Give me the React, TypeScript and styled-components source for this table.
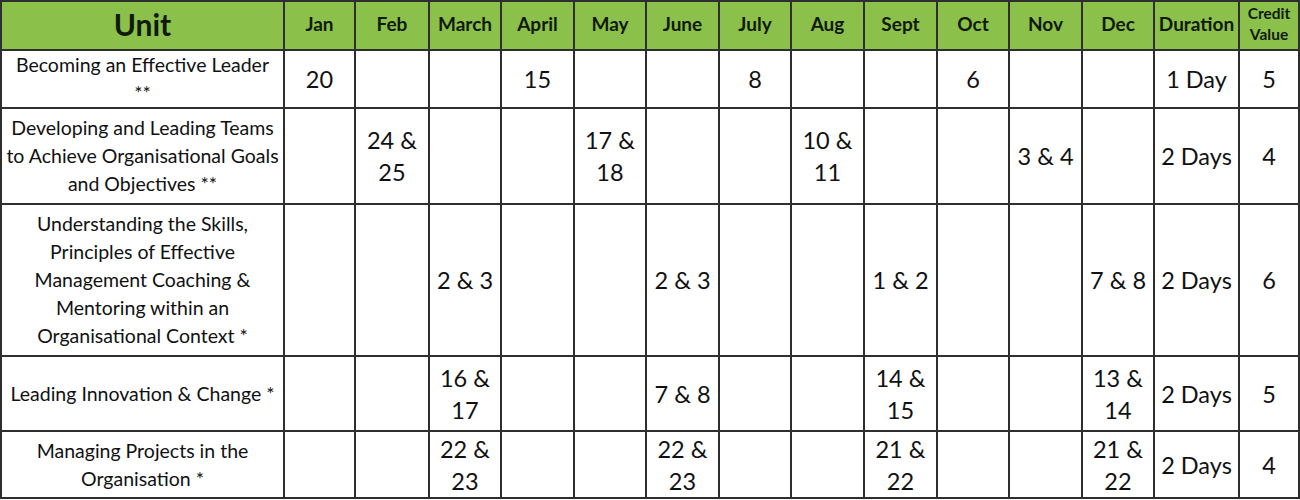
import React from 'react';
import styled, { createGlobalStyle } from 'styled-components';

const GlobalStyle = createGlobalStyle`
  html, body {
    margin: 0;
    padding: 0;
    background: #ffffff;
  }
  body {
    font-family: Lato, Carlito, 'Liberation Sans', sans-serif;
    color: #111;
  }
`;

interface IUnitRow {
  lines: string[];
  height: number;
  dates: Record<string, string>;
  duration: string;
  credit: string;
}

const months = ['Jan', 'Feb', 'March', 'April', 'May', 'June', 'July', 'Aug', 'Sept', 'Oct', 'Nov', 'Dec'];

const monthWidths = [71, 74, 72, 73, 72, 73, 72, 73, 73, 72, 73, 72];

const rows: IUnitRow[] = [
  {
    lines: ['Becoming an Effective Leader', '**'],
    height: 58,
    dates: { Jan: '20', April: '15', July: '8', Oct: '6' },
    duration: '1 Day',
    credit: '5',
  },
  {
    lines: ['Developing and Leading Teams', 'to Achieve Organisational Goals', 'and Objectives **'],
    height: 96,
    dates: { Feb: '24 & 25', May: '17 & 18', Aug: '10 & 11', Nov: '3 & 4' },
    duration: '2 Days',
    credit: '4',
  },
  {
    lines: [
      'Understanding the Skills,',
      'Principles of Effective',
      'Management Coaching &',
      'Mentoring within an',
      'Organisational Context *',
    ],
    height: 152,
    dates: { March: '2 & 3', June: '2 & 3', Sept: '1 & 2', Dec: '7 & 8' },
    duration: '2 Days',
    credit: '6',
  },
  {
    lines: ['Leading Innovation & Change *'],
    height: 75,
    dates: { March: '16 & 17', June: '7 & 8', Sept: '14 & 15', Dec: '13 & 14' },
    duration: '2 Days',
    credit: '5',
  },
  {
    lines: ['Managing Projects in the', 'Organisation *'],
    height: 67,
    dates: { March: '22 & 23', June: '22 & 23', Sept: '21 & 22', Dec: '21 & 22' },
    duration: '2 Days',
    credit: '4',
  },
];

const Table = styled.table`
  width: 1299px;
  border-collapse: collapse;
  table-layout: fixed;
`;

const Col = styled.col<{ $width: number }>`
  width: ${props => props.$width}px;
`;

const HeadRow = styled.tr`
  height: 49px;
  background: #8bc04a;
`;

const BodyRow = styled.tr<{ $height: number }>`
  height: ${props => props.$height}px;
`;

const HeadCell = styled.th<{ $size?: number; $lh?: number }>`
  border: 2px solid #2e2e2e;
  padding: 0 0 4px;
  text-align: center;
  vertical-align: middle;
  font-weight: 700;
  font-size: ${props => props.$size || 19}px;
  line-height: ${props => props.$lh || 22}px;
  color: #101a08;
  overflow: hidden;
`;

const UnitCell = styled.td`
  border: 2px solid #2e2e2e;
  padding: 0;
  text-align: center;
  vertical-align: middle;
  font-size: 19.5px;
  line-height: 28px;
  white-space: nowrap;
  color: #111;
`;

const DateCell = styled.td<{ $nowrap?: boolean }>`
  border: 2px solid #2e2e2e;
  padding: 0;
  text-align: center;
  vertical-align: middle;
  font-size: 23.5px;
  line-height: 32px;
  white-space: ${props => (props.$nowrap ? 'nowrap' : 'normal')};
  color: #111;
`;

// short ranges like "7 & 8" stay on one line, longer ones break after the ampersand
const fitsOneLine = (text: string) => text.length <= 5;

const App = () => {
  return (
    <>
      <GlobalStyle />
      <Table>
        <colgroup>
          <Col $width={283} />
          {monthWidths.map((w, i) => (
            <Col key={months[i]} $width={w} />
          ))}
          <Col $width={85} />
          <Col $width={60} />
        </colgroup>
        <thead>
          <HeadRow>
            <HeadCell $size={30} $lh={32}>Unit</HeadCell>
            {months.map(m => (
              <HeadCell key={m}>{m}</HeadCell>
            ))}
            <HeadCell>Duration</HeadCell>
            <HeadCell $size={15.5} $lh={21}>
              Credit
              <br />
              Value
            </HeadCell>
          </HeadRow>
        </thead>
        <tbody>
          {rows.map(row => (
            <BodyRow key={row.lines[0]} $height={row.height}>
              <UnitCell>
                {row.lines.map((line, i) => (
                  <React.Fragment key={line}>
                    {i > 0 && <br />}
                    {line}
                  </React.Fragment>
                ))}
              </UnitCell>
              {months.map(m => {
                const value = row.dates[m] || '';
                return (
                  <DateCell key={m} $nowrap={fitsOneLine(value)}>
                    {value}
                  </DateCell>
                );
              })}
              <DateCell $nowrap>{row.duration}</DateCell>
              <DateCell $nowrap>{row.credit}</DateCell>
            </BodyRow>
          ))}
        </tbody>
      </Table>
    </>
  );
};

export default App;
